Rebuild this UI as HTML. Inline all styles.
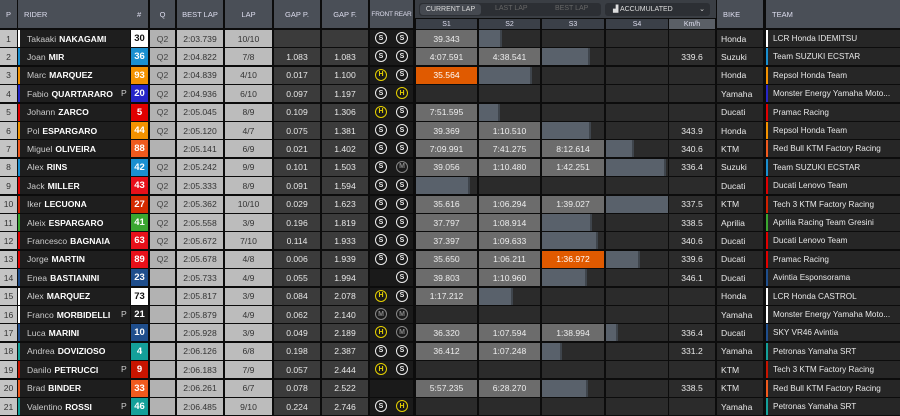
<!DOCTYPE html>
<html><head><meta charset="utf-8"><style>
*{box-sizing:border-box;margin:0;padding:0}
body{width:900px;height:416px;background:#0c0c0c;font-family:"Liberation Sans",sans-serif;font-size:8.6px;overflow:hidden;position:relative;color:#e8e8e8}
.h{position:absolute;top:0;height:28px;background:#4a4f57;color:#dde;font-size:7.5px;display:flex;align-items:center;justify-content:center;white-space:nowrap}
.hl{justify-content:flex-start;padding-left:6px}
.r{position:absolute;left:0;width:900px;height:17px}
.c{position:absolute;top:0;height:17px;display:flex;align-items:center;justify-content:center;white-space:nowrap;overflow:hidden}
.p{left:0;width:17px;background:#c4c4c4;color:#333}
.rd{left:18px;width:112px;background:#1e1e1e;justify-content:flex-start;padding-left:7px;color:#ccc;border-left:2px solid #fff}
.rd b{color:#fff;margin-left:3px}
.pp{position:absolute;left:101px;top:3px;color:#ccc}
.n{left:131px;width:17px;font-weight:bold;color:#fff;font-size:9.5px}
.q{left:150px;width:25px;background:#b2b2b2;color:#444}
.bl{left:177px;width:46px;background:#bcbcbc;color:#333}
.lp{left:225px;width:47px;background:#bcbcbc;color:#333}
.gp{left:274px;width:46px;background:#3b3b3b}
.gf{left:322px;width:46px;background:#3b3b3b}
.ty{left:370px;width:43px;background:#1a1a1a}
.t{position:absolute;top:2px;width:12px;height:12px;border:1.3px solid #eee;border-radius:50%;font-size:7px;font-weight:bold;display:flex;align-items:center;justify-content:center;color:#eee}
.t.a{left:5px}.t.b{left:26px}
.t.H{border-color:#e5d000;color:#e5d000}
.t.M{border-color:#888;color:#888}
.s{background:#2b2b2b;justify-content:flex-start}
.s1{left:416px;width:61px}.s2{left:479px;width:61px}.s3{left:542px;width:62px}.s4{left:606px;width:62px}
.km{left:669px;width:46px;background:#2b2b2b}
.k{width:100%;height:100%;background:#6c6c6c;display:flex;align-items:center;justify-content:center;color:#eee}
.o{background:#e05a00;color:#fff}
.bar{height:100%;background:#59616b;border-right:2px solid #3f454c}
.bk{left:717px;width:46px;background:#262626;justify-content:flex-start;padding-left:4px}
.tm{left:766px;width:134px;background:#262626;justify-content:flex-start;padding-left:5px;border-left:2px solid #fff;font-size:8.2px}
</style></head><body>
<div class="h" style="left:0;width:17px">P</div>
<div class="h hl" style="left:18px;width:130px">RIDER<span style="position:absolute;left:119px">#</span></div>
<div class="h" style="left:150px;width:25px">Q</div>
<div class="h" style="left:177px;width:46px">BEST LAP</div>
<div class="h" style="left:225px;width:47px">LAP</div>
<div class="h" style="left:274px;width:46px">GAP P.</div>
<div class="h" style="left:322px;width:46px">GAP F.</div>
<div class="h" style="left:370px;width:43px;font-size:6.5px;letter-spacing:-0.2px">FRONT REAR</div>
<div style="position:absolute;left:415px;top:0;width:301px;height:18px;background:#3a3e44"></div>
<div style="position:absolute;left:419px;top:3px;width:182px;height:13px;background:#2c2f34;border-radius:3px;font-size:7px;color:#666">
<div style="position:absolute;left:1px;top:1px;width:61px;height:11px;background:#454950;border-radius:3px;color:#ddd;text-align:center;line-height:11px">CURRENT LAP</div>
<span style="position:absolute;left:76px;top:2px">LAST LAP</span><span style="position:absolute;left:136px;top:2px">BEST LAP</span></div>
<div style="position:absolute;left:605px;top:3px;width:105px;height:13px;background:#2c2f34;border-radius:3px;font-size:7px;color:#ddd;line-height:13px;padding-left:8px">▟ ACCUMULATED<span style="position:absolute;right:5px">⌄</span></div>
<div class="h" style="top:19px;height:10px;left:416px;width:61px;background:#3b4048;font-size:7px">S1</div>
<div class="h" style="top:19px;height:10px;left:479px;width:61px;background:#3b4048;font-size:7px">S2</div>
<div class="h" style="top:19px;height:10px;left:542px;width:62px;background:#3b4048;font-size:7px">S3</div>
<div class="h" style="top:19px;height:10px;left:606px;width:62px;background:#3b4048;font-size:7px">S4</div>
<div class="h" style="top:19px;height:10px;left:669px;width:46px;background:#5a5f66;font-size:7px">Km/h</div>
<div class="h hl" style="left:717px;width:46px">BIKE</div>
<div class="h hl" style="left:766px;width:134px">TEAM</div>

<div class="r" style="top:30px"><div class="c p">1</div><div class="c rd">Takaaki<b>NAKAGAMI</b></div><div class="c n" style="background:#fff;color:#111">30</div><div class="c q">Q2</div><div class="c bl">2:03.739</div><div class="c lp">10/10</div><div class="c gp"></div><div class="c gf"></div><div class="c ty"><span class="t a">S</span><span class="t b">S</span></div><div class="c s s1"><div class="k">39.343</div></div><div class="c s s2"><div class="bar" style="width:23px"></div></div><div class="c s s3"></div><div class="c s s4"></div><div class="c km"></div><div class="c bk">Honda</div><div class="c tm">LCR Honda IDEMITSU</div></div>

<div class="r" style="top:48.4px"><div class="c p">2</div><div class="c rd" style="border-color:#1a8fd0">Joan<b>MIR</b></div><div class="c n" style="background:#1a8fd0">36</div><div class="c q">Q2</div><div class="c bl">2:04.822</div><div class="c lp">7/8</div><div class="c gp">1.083</div><div class="c gf">1.083</div><div class="c ty"><span class="t a">S</span><span class="t b">S</span></div><div class="c s s1"><div class="k">4:07.591</div></div><div class="c s s2"><div class="k">4:38.541</div></div><div class="c s s3"><div class="bar" style="width:48px"></div></div><div class="c s s4"></div><div class="c km">339.6</div><div class="c bk">Suzuki</div><div class="c tm" style="border-color:#1a8fd0">Team SUZUKI ECSTAR</div></div>

<div class="r" style="top:66.8px"><div class="c p">3</div><div class="c rd" style="border-color:#f39200">Marc<b>MARQUEZ</b></div><div class="c n" style="background:#f39200">93</div><div class="c q">Q2</div><div class="c bl">2:04.839</div><div class="c lp">4/10</div><div class="c gp">0.017</div><div class="c gf">1.100</div><div class="c ty"><span class="t a H">H</span><span class="t b">S</span></div><div class="c s s1"><div class="k o">35.564</div></div><div class="c s s2"><div class="bar" style="width:53px"></div></div><div class="c s s3"></div><div class="c s s4"></div><div class="c km"></div><div class="c bk">Honda</div><div class="c tm" style="border-color:#f39200">Repsol Honda Team</div></div>

<div class="r" style="top:85.2px"><div class="c p">4</div><div class="c rd" style="border-color:#2626c8">Fabio<b>QUARTARARO</b><span class="pp">P</span></div><div class="c n" style="background:#2626c8">20</div><div class="c q">Q2</div><div class="c bl">2:04.936</div><div class="c lp">6/10</div><div class="c gp">0.097</div><div class="c gf">1.197</div><div class="c ty"><span class="t a">S</span><span class="t b H">H</span></div><div class="c s s1"></div><div class="c s s2"></div><div class="c s s3"></div><div class="c s s4"></div><div class="c km"></div><div class="c bk">Yamaha</div><div class="c tm" style="border-color:#2626c8">Monster Energy Yamaha Moto...</div></div>

<div class="r" style="top:103.6px"><div class="c p">5</div><div class="c rd" style="border-color:#e00000">Johann<b>ZARCO</b></div><div class="c n" style="background:#e00000">5</div><div class="c q">Q2</div><div class="c bl">2:05.045</div><div class="c lp">8/9</div><div class="c gp">0.109</div><div class="c gf">1.306</div><div class="c ty"><span class="t a H">H</span><span class="t b">S</span></div><div class="c s s1"><div class="k">7:51.595</div></div><div class="c s s2"><div class="bar" style="width:21px"></div></div><div class="c s s3"></div><div class="c s s4"></div><div class="c km"></div><div class="c bk">Ducati</div><div class="c tm" style="border-color:#e00000">Pramac Racing</div></div>

<div class="r" style="top:122px"><div class="c p">6</div><div class="c rd" style="border-color:#f39200">Pol<b>ESPARGARO</b></div><div class="c n" style="background:#f39200">44</div><div class="c q">Q2</div><div class="c bl">2:05.120</div><div class="c lp">4/7</div><div class="c gp">0.075</div><div class="c gf">1.381</div><div class="c ty"><span class="t a">S</span><span class="t b">S</span></div><div class="c s s1"><div class="k">39.369</div></div><div class="c s s2"><div class="k">1:10.510</div></div><div class="c s s3"><div class="bar" style="width:49px"></div></div><div class="c s s4"></div><div class="c km">343.9</div><div class="c bk">Honda</div><div class="c tm" style="border-color:#f39200">Repsol Honda Team</div></div>

<div class="r" style="top:140.4px"><div class="c p">7</div><div class="c rd" style="border-color:#f05a1e">Miguel<b>OLIVEIRA</b></div><div class="c n" style="background:#f05a1e">88</div><div class="c q"></div><div class="c bl">2:05.141</div><div class="c lp">6/9</div><div class="c gp">0.021</div><div class="c gf">1.402</div><div class="c ty"><span class="t a">S</span><span class="t b">S</span></div><div class="c s s1"><div class="k">7:09.991</div></div><div class="c s s2"><div class="k">7:41.275</div></div><div class="c s s3"><div class="k">8:12.614</div></div><div class="c s s4"><div class="bar" style="width:28px"></div></div><div class="c km">340.6</div><div class="c bk">KTM</div><div class="c tm" style="border-color:#f05a1e">Red Bull KTM Factory Racing</div></div>

<div class="r" style="top:158.8px"><div class="c p">8</div><div class="c rd" style="border-color:#1a8fd0">Alex<b>RINS</b></div><div class="c n" style="background:#1a8fd0">42</div><div class="c q">Q2</div><div class="c bl">2:05.242</div><div class="c lp">9/9</div><div class="c gp">0.101</div><div class="c gf">1.503</div><div class="c ty"><span class="t a">S</span><span class="t b M">M</span></div><div class="c s s1"><div class="k">39.056</div></div><div class="c s s2"><div class="k">1:10.480</div></div><div class="c s s3"><div class="k">1:42.251</div></div><div class="c s s4"><div class="bar" style="width:60px"></div></div><div class="c km">336.4</div><div class="c bk">Suzuki</div><div class="c tm" style="border-color:#1a8fd0">Team SUZUKI ECSTAR</div></div>

<div class="r" style="top:177.2px"><div class="c p">9</div><div class="c rd" style="border-color:#e00000">Jack<b>MILLER</b></div><div class="c n" style="background:#e8101a">43</div><div class="c q">Q2</div><div class="c bl">2:05.333</div><div class="c lp">8/9</div><div class="c gp">0.091</div><div class="c gf">1.594</div><div class="c ty"><span class="t a">S</span><span class="t b">S</span></div><div class="c s s1"><div class="bar" style="width:54px"></div></div><div class="c s s2"></div><div class="c s s3"></div><div class="c s s4"></div><div class="c km"></div><div class="c bk">Ducati</div><div class="c tm" style="border-color:#e00000">Ducati Lenovo Team</div></div>

<div class="r" style="top:195.6px"><div class="c p">10</div><div class="c rd" style="border-color:#d02000">Iker<b>LECUONA</b></div><div class="c n" style="background:#d42a00">27</div><div class="c q">Q2</div><div class="c bl">2:05.362</div><div class="c lp">10/10</div><div class="c gp">0.029</div><div class="c gf">1.623</div><div class="c ty"><span class="t a">S</span><span class="t b">S</span></div><div class="c s s1"><div class="k">35.616</div></div><div class="c s s2"><div class="k">1:06.294</div></div><div class="c s s3"><div class="k">1:39.027</div></div><div class="c s s4"><div class="bar" style="width:62px;border:0"></div></div><div class="c km">337.5</div><div class="c bk">KTM</div><div class="c tm" style="border-color:#d02000">Tech 3 KTM Factory Racing</div></div>

<div class="r" style="top:214px"><div class="c p">11</div><div class="c rd" style="border-color:#3aa630">Aleix<b>ESPARGARO</b></div><div class="c n" style="background:#3aa630">41</div><div class="c q">Q2</div><div class="c bl">2:05.558</div><div class="c lp">3/9</div><div class="c gp">0.196</div><div class="c gf">1.819</div><div class="c ty"><span class="t a">S</span><span class="t b">S</span></div><div class="c s s1"><div class="k">37.797</div></div><div class="c s s2"><div class="k">1:08.914</div></div><div class="c s s3"><div class="bar" style="width:50px"></div></div><div class="c s s4"></div><div class="c km">338.5</div><div class="c bk">Aprilia</div><div class="c tm" style="border-color:#3aa630">Aprilia Racing Team Gresini</div></div>

<div class="r" style="top:232.4px"><div class="c p">12</div><div class="c rd" style="border-color:#e00000">Francesco<b>BAGNAIA</b></div><div class="c n" style="background:#e8101a">63</div><div class="c q">Q2</div><div class="c bl">2:05.672</div><div class="c lp">7/10</div><div class="c gp">0.114</div><div class="c gf">1.933</div><div class="c ty"><span class="t a">S</span><span class="t b">S</span></div><div class="c s s1"><div class="k">37.397</div></div><div class="c s s2"><div class="k">1:09.633</div></div><div class="c s s3"><div class="bar" style="width:56px"></div></div><div class="c s s4"></div><div class="c km">340.6</div><div class="c bk">Ducati</div><div class="c tm" style="border-color:#e00000">Ducati Lenovo Team</div></div>

<div class="r" style="top:250.8px"><div class="c p">13</div><div class="c rd" style="border-color:#e00000">Jorge<b>MARTIN</b></div><div class="c n" style="background:#e8101a">89</div><div class="c q">Q2</div><div class="c bl">2:05.678</div><div class="c lp">4/8</div><div class="c gp">0.006</div><div class="c gf">1.939</div><div class="c ty"><span class="t a">S</span><span class="t b">S</span></div><div class="c s s1"><div class="k">35.650</div></div><div class="c s s2"><div class="k">1:06.211</div></div><div class="c s s3"><div class="k o">1:36.972</div></div><div class="c s s4"><div class="bar" style="width:34px"></div></div><div class="c km">339.6</div><div class="c bk">Ducati</div><div class="c tm" style="border-color:#e00000">Pramac Racing</div></div>

<div class="r" style="top:269.2px"><div class="c p">14</div><div class="c rd" style="border-color:#1f4e8c">Enea<b>BASTIANINI</b></div><div class="c n" style="background:#1f4e8c">23</div><div class="c q"></div><div class="c bl">2:05.733</div><div class="c lp">4/9</div><div class="c gp">0.055</div><div class="c gf">1.994</div><div class="c ty"><span class="t b">S</span></div><div class="c s s1"><div class="k">39.803</div></div><div class="c s s2"><div class="k">1:10.960</div></div><div class="c s s3"><div class="bar" style="width:45px"></div></div><div class="c s s4"></div><div class="c km">346.1</div><div class="c bk">Ducati</div><div class="c tm" style="border-color:#1f4e8c">Avintia Esponsorama</div></div>

<div class="r" style="top:287.6px"><div class="c p">15</div><div class="c rd">Alex<b>MARQUEZ</b></div><div class="c n" style="background:#fff;color:#111">73</div><div class="c q"></div><div class="c bl">2:05.817</div><div class="c lp">3/9</div><div class="c gp">0.084</div><div class="c gf">2.078</div><div class="c ty"><span class="t a H">H</span><span class="t b">S</span></div><div class="c s s1"><div class="k">1:17.212</div></div><div class="c s s2"><div class="bar" style="width:34px"></div></div><div class="c s s3"></div><div class="c s s4"></div><div class="c km"></div><div class="c bk">Honda</div><div class="c tm">LCR Honda CASTROL</div></div>

<div class="r" style="top:306px"><div class="c p">16</div><div class="c rd">Franco<b>MORBIDELLI</b><span class="pp">P</span></div><div class="c n" style="background:#1e1e1e">21</div><div class="c q"></div><div class="c bl">2:05.879</div><div class="c lp">4/9</div><div class="c gp">0.062</div><div class="c gf">2.140</div><div class="c ty"><span class="t a M">M</span><span class="t b M">M</span></div><div class="c s s1"></div><div class="c s s2"></div><div class="c s s3"></div><div class="c s s4"></div><div class="c km"></div><div class="c bk">Yamaha</div><div class="c tm">Monster Energy Yamaha Moto...</div></div>

<div class="r" style="top:324.4px"><div class="c p">17</div><div class="c rd" style="border-color:#1f4e8c">Luca<b>MARINI</b></div><div class="c n" style="background:#1f4e8c">10</div><div class="c q"></div><div class="c bl">2:05.928</div><div class="c lp">3/9</div><div class="c gp">0.049</div><div class="c gf">2.189</div><div class="c ty"><span class="t a H">H</span><span class="t b M">M</span></div><div class="c s s1"><div class="k">36.320</div></div><div class="c s s2"><div class="k">1:07.594</div></div><div class="c s s3"><div class="k">1:38.994</div></div><div class="c s s4"><div class="bar" style="width:12px"></div></div><div class="c km">336.4</div><div class="c bk">Ducati</div><div class="c tm" style="border-color:#1f4e8c">SKY VR46 Avintia</div></div>

<div class="r" style="top:342.8px"><div class="c p">18</div><div class="c rd" style="border-color:#14a09a">Andrea<b>DOVIZIOSO</b></div><div class="c n" style="background:#14a09a">4</div><div class="c q"></div><div class="c bl">2:06.126</div><div class="c lp">6/8</div><div class="c gp">0.198</div><div class="c gf">2.387</div><div class="c ty"><span class="t a">S</span><span class="t b">S</span></div><div class="c s s1"><div class="k">36.412</div></div><div class="c s s2"><div class="k">1:07.248</div></div><div class="c s s3"><div class="bar" style="width:20px"></div></div><div class="c s s4"></div><div class="c km">331.2</div><div class="c bk">Yamaha</div><div class="c tm" style="border-color:#14a09a">Petronas Yamaha SRT</div></div>

<div class="r" style="top:361.2px"><div class="c p">19</div><div class="c rd" style="border-color:#c81400">Danilo<b>PETRUCCI</b><span class="pp">P</span></div><div class="c n" style="background:#c81400">9</div><div class="c q"></div><div class="c bl">2:06.183</div><div class="c lp">7/9</div><div class="c gp">0.057</div><div class="c gf">2.444</div><div class="c ty"><span class="t a H">H</span><span class="t b">S</span></div><div class="c s s1"></div><div class="c s s2"></div><div class="c s s3"></div><div class="c s s4"></div><div class="c km"></div><div class="c bk">KTM</div><div class="c tm" style="border-color:#c81400">Tech 3 KTM Factory Racing</div></div>

<div class="r" style="top:379.6px"><div class="c p">20</div><div class="c rd" style="border-color:#f05a1e">Brad<b>BINDER</b></div><div class="c n" style="background:#f05a1e">33</div><div class="c q"></div><div class="c bl">2:06.261</div><div class="c lp">6/7</div><div class="c gp">0.078</div><div class="c gf">2.522</div><div class="c ty"></div><div class="c s s1"><div class="k">5:57.235</div></div><div class="c s s2"><div class="k">6:28.270</div></div><div class="c s s3"><div class="bar" style="width:46px"></div></div><div class="c s s4"></div><div class="c km">338.5</div><div class="c bk">KTM</div><div class="c tm" style="border-color:#f05a1e">Red Bull KTM Factory Racing</div></div>

<div class="r" style="top:398px"><div class="c p">21</div><div class="c rd" style="border-color:#14a09a">Valentino<b>ROSSI</b><span class="pp">P</span></div><div class="c n" style="background:#14a09a">46</div><div class="c q"></div><div class="c bl">2:06.485</div><div class="c lp">9/10</div><div class="c gp">0.224</div><div class="c gf">2.746</div><div class="c ty"><span class="t a">S</span><span class="t b H">H</span></div><div class="c s s1"></div><div class="c s s2"></div><div class="c s s3"></div><div class="c s s4"></div><div class="c km"></div><div class="c bk">Yamaha</div><div class="c tm" style="border-color:#14a09a">Petronas Yamaha SRT</div></div>
</body></html>
